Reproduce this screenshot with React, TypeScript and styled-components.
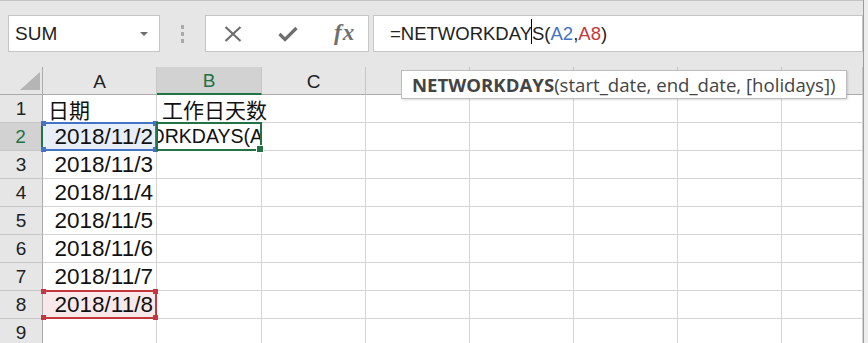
import styled, { createGlobalStyle } from 'styled-components';

const GlobalStyle = createGlobalStyle`
  html, body {
    margin: 0;
    padding: 0;
    background: #ededed;
    overflow: hidden;
  }
`;

const GREEN = '#217346';
const BLUE = '#4472c4';
const RED = '#c4373f';

const Frame = styled.div`
  width: 863px;
  height: 343px;
  border-right: 1px solid #9c9c9c;
  background: #e6e6e6;
  display: flex;
  flex-direction: column;
  font-family: 'Liberation Sans', Arial, sans-serif;
  overflow: hidden;
`;

const Toolbar = styled.div`
  flex-shrink: 0;
  height: 52px;
  border-top: 1px solid #c4c4c4;
  padding: 14px 0 0 8px;
  display: flex;
  align-items: flex-start;
  background: #e6e6e6;
`;

const Box = styled.div`
  height: 37px;
  box-sizing: border-box;
  border: 1px solid #c6c6c6;
  background: #fff;
  display: flex;
  align-items: center;
`;

const NameBox = styled(Box)`
  width: 152px;
  padding: 0 0 0 6px;
  justify-content: space-between;
  font-size: 19px;
  color: #222;
`;

const DropArrow = styled.span`
  width: 0;
  height: 0;
  margin-right: 11px;
  border-left: 4px solid transparent;
  border-right: 4px solid transparent;
  border-top: 4px solid #6b6b6b;
`;

const Grip = styled.div`
  width: 45px;
  height: 37px;
  display: flex;
  flex-direction: column;
  align-items: center;
  justify-content: center;
  gap: 3px;

  span {
    width: 3px;
    height: 4px;
    background: #a9a9a9;
  }
`;

const ButtonBox = styled(Box)`
  width: 164px;
  flex-shrink: 0;
  padding-left: 18px;
`;

const IconSlot = styled.div<{ $width?: number }>`
  flex: 0 0 ${p => (p.$width ? `${p.$width}px` : 'auto')};
  display: flex;
  align-items: center;
  justify-content: flex-start;
`;

const Fx = styled.span`
  font-family: 'Liberation Serif', 'Times New Roman', serif;
  font-style: italic;
  font-weight: 700;
  font-size: 23px;
  color: #707070;
  letter-spacing: 1px;
  margin: -2px 0 0 2px;
`;

const FormulaBox = styled(Box)`
  flex: 1;
  margin-left: 4px;
  padding-left: 16px;
  font-size: 18.5px;
  color: #222;
  white-space: pre;
`;

const Ref = styled.span<{ $color: string }>`
  color: ${p => p.$color};
`;

const Caret = styled.span`
  display: inline-block;
  width: 0;
  height: 25px;
  border-left: 1px solid #000;
  vertical-align: middle;
  margin: -4px 0 0 -1px;
`;

const Sheet = styled.div`
  position: relative;
  flex: 1;
  min-height: 0;
  overflow: hidden;
  display: grid;
  grid-template-columns: 43px 114px 105px 104px 104px 104px 104px 104px 1fr;
  grid-auto-rows: 28px;
  background: #fff;
`;

const Corner = styled.div`
  position: relative;
  box-sizing: border-box;
  background: #e6e6e6;
  border-right: 1px solid #ababab;
  border-bottom: 1px solid #ababab;

  &::after {
    content: '';
    position: absolute;
    left: 20px;
    top: 5px;
    width: 20px;
    height: 18px;
    background: #b5b5b5;
    clip-path: polygon(100% 0, 100% 100%, 0 100%);
  }
`;

const ColHeader = styled.div<{ $selected?: boolean }>`
  box-sizing: border-box;
  display: flex;
  align-items: center;
  justify-content: center;
  padding-top: 2px;
  font-size: 19px;
  background: ${p => (p.$selected ? '#d2d2d2' : '#e6e6e6')};
  color: ${p => (p.$selected ? GREEN : '#222')};
  border-right: 1px solid #c6c6c6;
  border-bottom: ${p => (p.$selected ? `2px solid ${GREEN}` : '1px solid #ababab')};
`;

const RowHeader = styled.div<{ $selected?: boolean }>`
  box-sizing: border-box;
  display: flex;
  align-items: flex-end;
  justify-content: center;
  padding-bottom: 2px;
  font-size: 19px;
  background: ${p => (p.$selected ? '#d2d2d2' : '#e6e6e6')};
  color: ${p => (p.$selected ? GREEN : '#222')};
  border-bottom: 1px solid #c6c6c6;
  border-right: ${p => (p.$selected ? `2px solid ${GREEN}` : '1px solid #ababab')};
`;

const Cell = styled.div<{ $align?: 'left' | 'right'; $tint?: string; $spill?: boolean }>`
  position: relative;
  box-sizing: border-box;
  display: flex;
  align-items: flex-end;
  justify-content: ${p => (p.$align === 'right' ? 'flex-end' : 'flex-start')};
  padding: 0 3px 0 5px;
  background: ${p => p.$tint || '#fff'};
  border-right: ${p => (p.$spill ? 'none' : '1px solid #d4d4d4')};
  border-bottom: 1px solid #d4d4d4;
  font-size: 22.5px;
  line-height: 26px;
  color: #111;
  white-space: nowrap;
`;

const CjkText = styled.span`
  font-family: 'Noto Sans CJK SC', 'Liberation Sans', sans-serif;
  font-size: 21px;
  line-height: 26px;
  position: relative;
  z-index: 1;
`;

const EditText = styled.div`
  position: absolute;
  inset: 0 -2px 0 0;
  overflow: hidden;
  display: flex;
  align-items: flex-end;
  justify-content: flex-end;
  padding-bottom: 1px;
  font-size: 19.5px;
  white-space: nowrap;
`;

const RangeBorder = styled.div<{ $color: string; $left?: boolean }>`
  position: absolute;
  left: -1px;
  top: -1px;
  right: -1px;
  bottom: -1px;
  border: 2px solid ${p => p.$color};
  border-left-color: ${p => (p.$left ? p.$color : 'transparent')};
  pointer-events: none;
  z-index: 2;
`;

const Handle = styled.span<{ $color: string; $x: 'l' | 'r'; $y: 't' | 'b' }>`
  position: absolute;
  width: 5px;
  height: 5px;
  background: ${p => p.$color};
  ${p => (p.$x === 'l' ? 'left: -3px;' : 'right: -3px;')}
  ${p => (p.$y === 't' ? 'top: -3px;' : 'bottom: -3px;')}
`;

const FillHandle = styled.span`
  position: absolute;
  right: -4px;
  bottom: -4px;
  width: 6px;
  height: 6px;
  background: ${GREEN};
  border: 1px solid #fff;
`;

const Tooltip = styled.div`
  position: absolute;
  left: 401px;
  top: 3px;
  height: 29px;
  box-sizing: border-box;
  padding: 0 10px;
  display: flex;
  align-items: center;
  background: #fff;
  border: 1px solid #bdbdbd;
  box-shadow: 1px 1px 2px rgba(0, 0, 0, 0.15);
  font-family: 'Open Sans', 'Noto Sans', sans-serif;
  font-size: 18.6px;
  color: #444;
  white-space: nowrap;
  z-index: 5;

  b {
    font-weight: 700;
  }
`;

const columns = ['A', 'B', 'C', '', '', '', '', ''];

const dates = [2, 3, 4, 5, 6, 7, 8].map(d => `2018/11/${d}`);

const Corners = ({ color }: { color: string }) => (
  <>
    <Handle $color={color} $x="l" $y="t" />
    <Handle $color={color} $x="r" $y="t" />
    <Handle $color={color} $x="l" $y="b" />
    <Handle $color={color} $x="r" $y="b" />
  </>
);

const EmptyCells = ({ count }: { count: number }) => (
  <>
    {Array.from({ length: count }, (_, i) => (
      <Cell key={i} />
    ))}
  </>
);

const App = () => {
  return (
    <>
      <GlobalStyle />
      <Frame>
        <Toolbar>
          <NameBox>
            SUM
            <DropArrow />
          </NameBox>
          <Grip>
            <span />
            <span />
            <span />
          </Grip>
          <ButtonBox>
            <IconSlot $width={54}>
              <svg width="18" height="16" viewBox="0 0 18 16">
                <path d="M1.5 1 L16.5 15 M16.5 1 L1.5 15" stroke="#6e6e6e" strokeWidth="2.2" fill="none" />
              </svg>
            </IconSlot>
            <IconSlot $width={54}>
              <svg width="20" height="16" viewBox="0 0 20 16">
                <path d="M1.5 8 L7 13.5 L18.5 2" stroke="#6e6e6e" strokeWidth="3.2" fill="none" />
              </svg>
            </IconSlot>
            <IconSlot>
              <Fx>fx</Fx>
            </IconSlot>
          </ButtonBox>
          <FormulaBox>
            =NETWORKDAY
            <Caret />
            S(<Ref $color={BLUE}>A2</Ref>,<Ref $color={RED}>A8</Ref>)
          </FormulaBox>
        </Toolbar>

        <Sheet>
          <Corner />
          {columns.map((c, i) => (
            <ColHeader key={i} $selected={c === 'B'}>
              {c}
            </ColHeader>
          ))}

          <RowHeader>1</RowHeader>
          <Cell>
            <CjkText>日期</CjkText>
          </Cell>
          <Cell $spill>
            <CjkText>工作日天数</CjkText>
          </Cell>
          <EmptyCells count={6} />

          {dates.map((d, i) => {
            const row = i + 2;
            return [
              <RowHeader key={`h${row}`} $selected={row === 2}>
                {row}
              </RowHeader>,
              <Cell
                key={`a${row}`}
                $align="right"
                $tint={row === 2 ? '#e8eef8' : row === 8 ? '#f9e8ea' : undefined}
              >
                {d}
                {row === 2 && (
                  <RangeBorder $color={BLUE}>
                    <Corners color={BLUE} />
                  </RangeBorder>
                )}
                {row === 8 && (
                  <RangeBorder $color={RED}>
                    <Corners color={RED} />
                  </RangeBorder>
                )}
              </Cell>,
              <Cell key={`b${row}`}>
                {row === 2 && (
                  <>
                    <EditText>=NETWORKDAYS(A</EditText>
                    <RangeBorder $color={GREEN} $left>
                      <FillHandle />
                    </RangeBorder>
                  </>
                )}
              </Cell>,
              <EmptyCells key={`e${row}`} count={6} />,
            ];
          })}

          <RowHeader>9</RowHeader>
          <EmptyCells count={8} />

          <Tooltip>
            <b>NETWORKDAYS</b>(start_date, end_date, [holidays])
          </Tooltip>
        </Sheet>
      </Frame>
    </>
  );
};

export default App;
